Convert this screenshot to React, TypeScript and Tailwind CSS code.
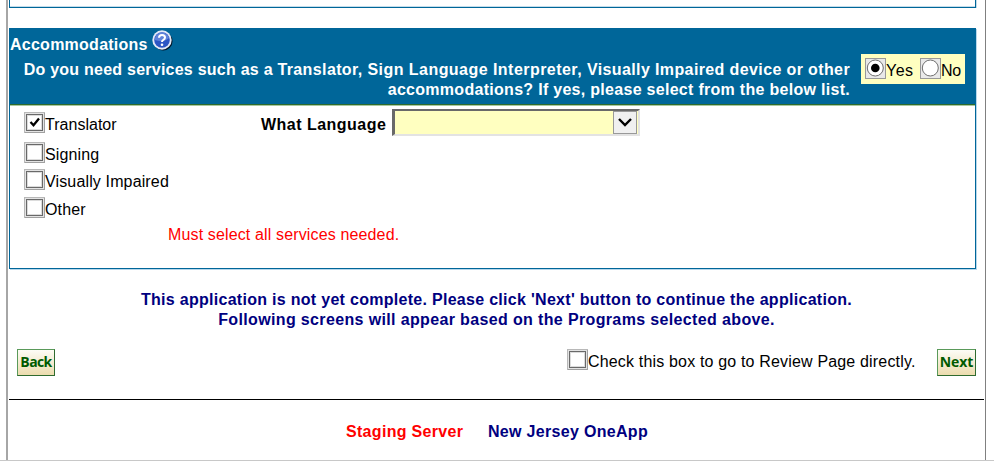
import React from 'react';

function Check({ checked = false }: { checked?: boolean }) {
  return (
    <svg width="21" height="21" viewBox="0 0 21 21" className="block shrink-0" shapeRendering="crispEdges">
      <rect width="21" height="21" fill="#e3e3e3" />
      <path d="M0 0H21V21H0ZM1 1V20H20V1Z" fill="#a0a0a0" fillRule="evenodd" />
      <path d="M0 0H21V1H1V21H0Z" fill="#b8b8b8" />
      <rect x="2.5" y="2.5" width="16" height="16" fill="#fff" stroke="#696969" />
      <rect x="3.5" y="3.5" width="14" height="14" fill="none" stroke="#dcdcdc" />
      {checked && <path d="M6.5 10L9.5 13.2L15 6.5" fill="none" stroke="#000" strokeWidth="2.3" shapeRendering="auto" />}
    </svg>
  );
}

function Radio({ checked = false }: { checked?: boolean }) {
  return (
    <svg width="21" height="21" viewBox="0 0 21 21" className="block shrink-0">
      <rect x="0.5" y="0.5" width="20" height="20" fill="#e9e9e9" stroke="#999" />
      <circle cx="10.3" cy="10" r="8" fill="#fff" stroke="#6e6e6e" />
      {checked && <circle cx="10.3" cy="10" r="4.3" fill="#000" />}
    </svg>
  );
}

function Help() {
  return (
    <svg width="21" height="21" viewBox="0 0 21 21" className="block">
      <circle cx="11.2" cy="11.2" r="9.3" fill="#001528" />
      <circle cx="10" cy="10" r="9.7" fill="#e4eaf8" />
      <circle cx="10" cy="10" r="7.8" fill="#2c55c4" />
      <path d="M2.8 10A7.2 7.2 0 0 1 17 8Q12 13 2.8 10Z" fill="#5f83da" />
      <path d="M7 7.8Q7.1 5 10 5Q13 5 13 7.5Q13 9 11.4 9.8Q10 10.5 10 12" fill="none" stroke="#fff" strokeWidth="2" />
      <circle cx="10" cy="14.7" r="1.3" fill="#fff" />
    </svg>
  );
}

function Option({ label, checked, className }: { label: string; checked?: boolean; className: string }) {
  return (
    <label className={`flex h-[21px] ${className}`}>
      <Check checked={checked} />
      <span className="pt-[3px]">{label}</span>
    </label>
  );
}

const button =
  'h-[27px] border border-[#5a9a5a] border-r-[#2f6b2f] border-b-[#2f6b2f] bg-linear-to-b from-[#fdfcf6] to-[#ecdcae] font-["Open_Sans",sans-serif] text-[14px] leading-[23px] pb-[2px] font-bold text-[#005a00] text-center whitespace-nowrap';

export default function App() {
  return (
    <div className="h-[461px] w-[994px] overflow-hidden border-b border-[#c8c8c8] bg-white pl-[6px] font-['Liberation_Sans',Arial,sans-serif] text-[16px] leading-[20px] tracking-[0.14px] whitespace-nowrap text-black">
      <div className="h-[460px] w-[980px] border-r border-l-2 border-r-[#808080] border-l-[#a6a6a6] pl-px">
        <div className="h-[8px] w-[967px] border-x border-b border-[#006699] shadow-[inset_0_-1px_0_#c4dcea,1px_0_0_#c4dcea]" />
        <section className="mt-[20px] h-[241px] w-[967px] border-x border-b border-[#006699] shadow-[1px_1px_0_#b8d8ec]">
          <header className="h-[77px] border-b border-[#2e6b2d] bg-[#006699] font-bold text-white shadow-[0_1px_0_#a9c9a0]">
            <div className="flex h-[32px]">
              <h2 className="w-[142px] pt-[7px] tracking-[0.25px]">Accommodations</h2>
              <div className="pt-[2px]"><Help /></div>
            </div>
            <div className="flex">
              <p className="w-[840px] text-right tracking-[0.38px]">
                <span className="tracking-[0.24px]">Do you need services such as a </span>
                <span className="tracking-[0.38px]">Translator, </span>
                <span className="tracking-[0.46px]">Sign Language Interpreter, </span>
                Visually Impaired device or other
                <br />
                <span className="tracking-[0.29px]">accommodations? If yes, please select from the below list.</span>
              </p>
              <div className="ml-[11px] -mt-[6px] flex h-[30px] w-[104px] bg-[#ffffc0] pt-[4px] pl-[4px] font-normal text-black">
                <Radio checked />
                <span className="w-[34px] pt-[3px] tracking-[0.5px]">Yes</span>
                <Radio />
                <span className="pt-[3px] tracking-[-0.2px]">No</span>
              </div>
            </div>
          </header>
          <div className="pl-[14px]">
            <div className="flex h-[37px]">
              <Option label="Translator" checked className="mt-[7px] w-[237px] tracking-[0.02px]" />
              <span className="mt-[10px] w-[131px] font-bold tracking-[0.48px]">What Language</span>
              <div className="mt-[4px] flex h-[27px] w-[248px] border-3 border-t-2 border-r-2 border-b-2 border-[#696969] border-r-[#e3e3e3] border-b-[#e3e3e3] bg-[#ffffc0]">
                <div className="flex-1" />
                <div className="mr-px flex h-[23px] w-[24px] items-center justify-center border border-[#999] bg-[#f0f0f0]">
                  <svg width="14" height="9" viewBox="0 0 14 9">
                    <path d="M1 1L7 7L13 1" fill="none" stroke="#000" strokeWidth="2.4" />
                  </svg>
                </div>
              </div>
            </div>
            <Option label="Signing" className="" />
            <Option label="Visually Impaired" className="mt-[6px]" />
            <Option label="Other" className="mt-[7px]" />
            <p className="mt-[7px] pl-[144px] text-[#ff0000]">Must select all services needed.</p>
          </div>
        </section>
        <div className="mt-[21px] w-[975px] text-center font-bold tracking-[0.36px] text-[#000080]">
          <span className="tracking-[0.29px]">This application is not yet complete. Please click 'Next' button to continue the application.</span>
          <br />
          Following screens will appear based on the Programs selected above.
        </div>
        <div className="mt-[19px] flex h-[50px] w-[975px] pl-[8px]">
          <button className={`${button} w-[38px] tracking-[-0.6px]`}>Back</button>
          <label className="ml-[512px] flex w-[370px]">
            <Check />
            <span className="pt-[3px] tracking-[0.17px]">Check this box to go to Review Page directly.</span>
          </label>
          <button className={`${button} w-[39px] tracking-[-0.1px]`}>Next</button>
        </div>
        <footer className="flex w-[975px] border-t border-black pt-[22px] pl-[337px] font-bold tracking-[0.31px]">
          <span className="w-[142px] text-[#ff0000]">Staging Server</span>
          <span className="text-[#000080]">New Jersey OneApp</span>
        </footer>
      </div>
    </div>
  );
}
